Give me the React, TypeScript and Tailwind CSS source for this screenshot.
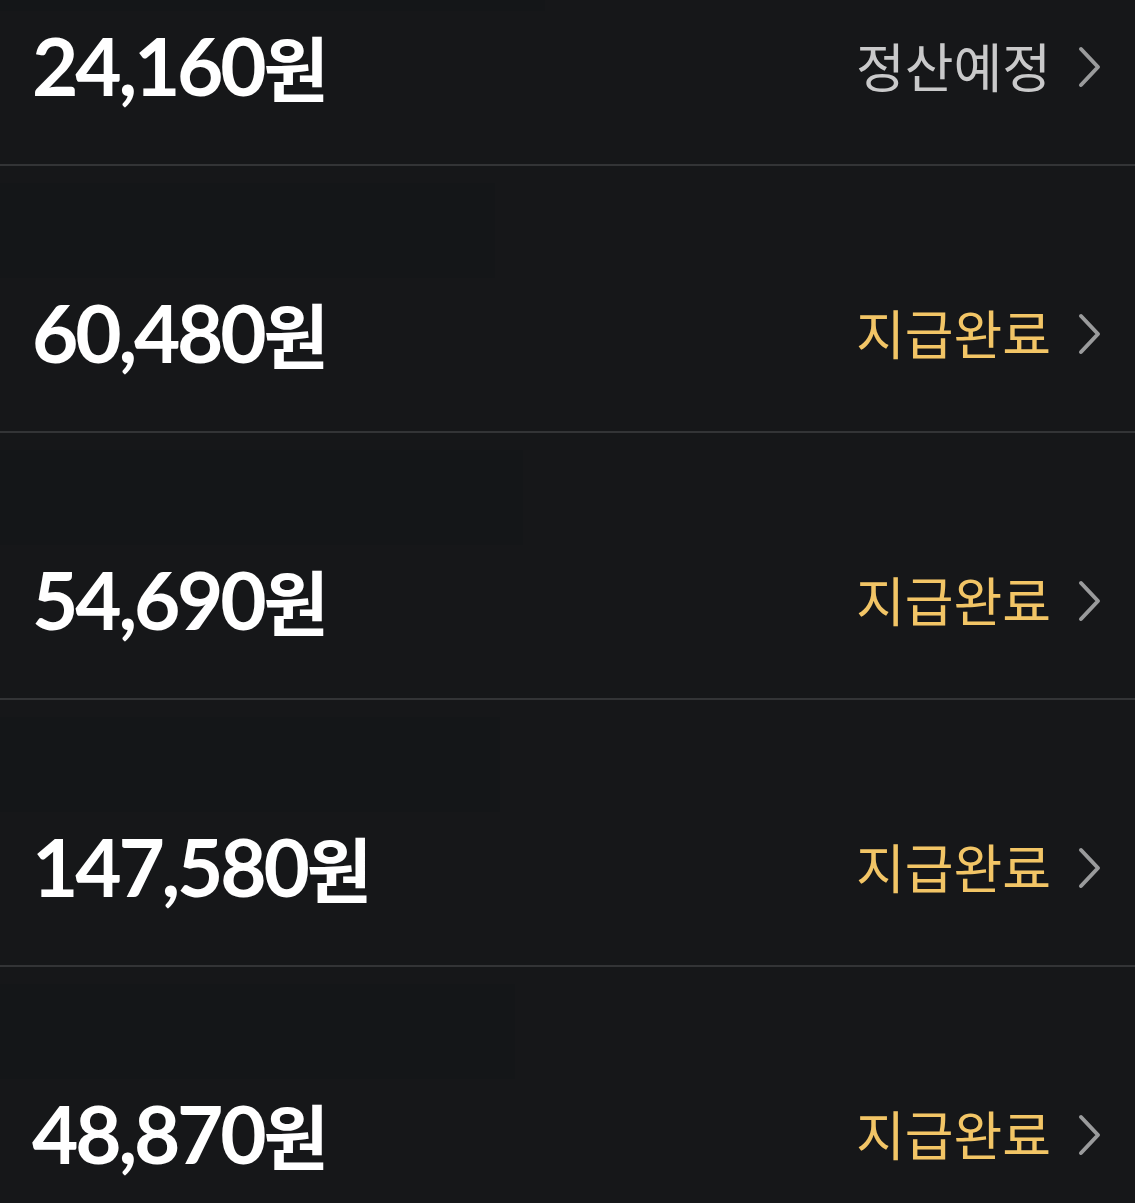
const rows = [
  { amount: "24,160", status: "정산예정", done: false, mask: "w-[545px]" },
  { amount: "60,480", status: "지급완료", done: true, mask: "w-[495px]" },
  { amount: "54,690", status: "지급완료", done: true, mask: "w-[523px]" },
  { amount: "147,580", status: "지급완료", done: true, mask: "w-[500px]" },
  { amount: "48,870", status: "지급완료", done: true, mask: "w-[515px]" },
];

function Chevron() {
  return (
    <svg width="24" height="42" viewBox="0 0 24 42" fill="none" className="mt-[4px] shrink-0">
      <path
        d="M4 3 L21 21 L4 39"
        stroke="#9a9b9c"
        strokeWidth="4"
        strokeLinecap="round"
        strokeLinejoin="round"
      />
    </svg>
  );
}

export default function App() {
  return (
    <div className="h-screen overflow-hidden bg-[#161719]">
      <div className="-mt-[101px]">
        {rows.map((row) => (
          <div key={row.amount} className="border-b-2 border-[#333436]">
            <div className="pt-[17px] pb-[45px]">
              {/* masked area */}
              <div className={`h-[95px] ${row.mask} bg-[#141618]`} />
              <div className="flex h-[108px] items-center justify-between pl-[32px] pr-[34px]">
                <div
                  className="text-[80px] font-bold leading-none tracking-[-0.04em] text-white"
                  style={{ fontFamily: "Lato, 'Noto Sans CJK KR', sans-serif" }}
                >
                  {row.amount}
                  <span
                    style={{ fontFamily: "'Noto Sans CJK KR', sans-serif" }}
                    className="text-[71px] tracking-normal"
                  >
                    원
                  </span>
                </div>
                <div className="flex items-center gap-[26px]">
                  <span
                    className={`text-[53px] leading-none ${row.done ? "text-[#f2c566]" : "text-[#c9c9ca]"}`}
                    style={{ fontFamily: "'Noto Sans CJK KR', sans-serif" }}
                  >
                    {row.status}
                  </span>
                  <Chevron />
                </div>
              </div>
            </div>
          </div>
        ))}
      </div>
    </div>
  );
}
